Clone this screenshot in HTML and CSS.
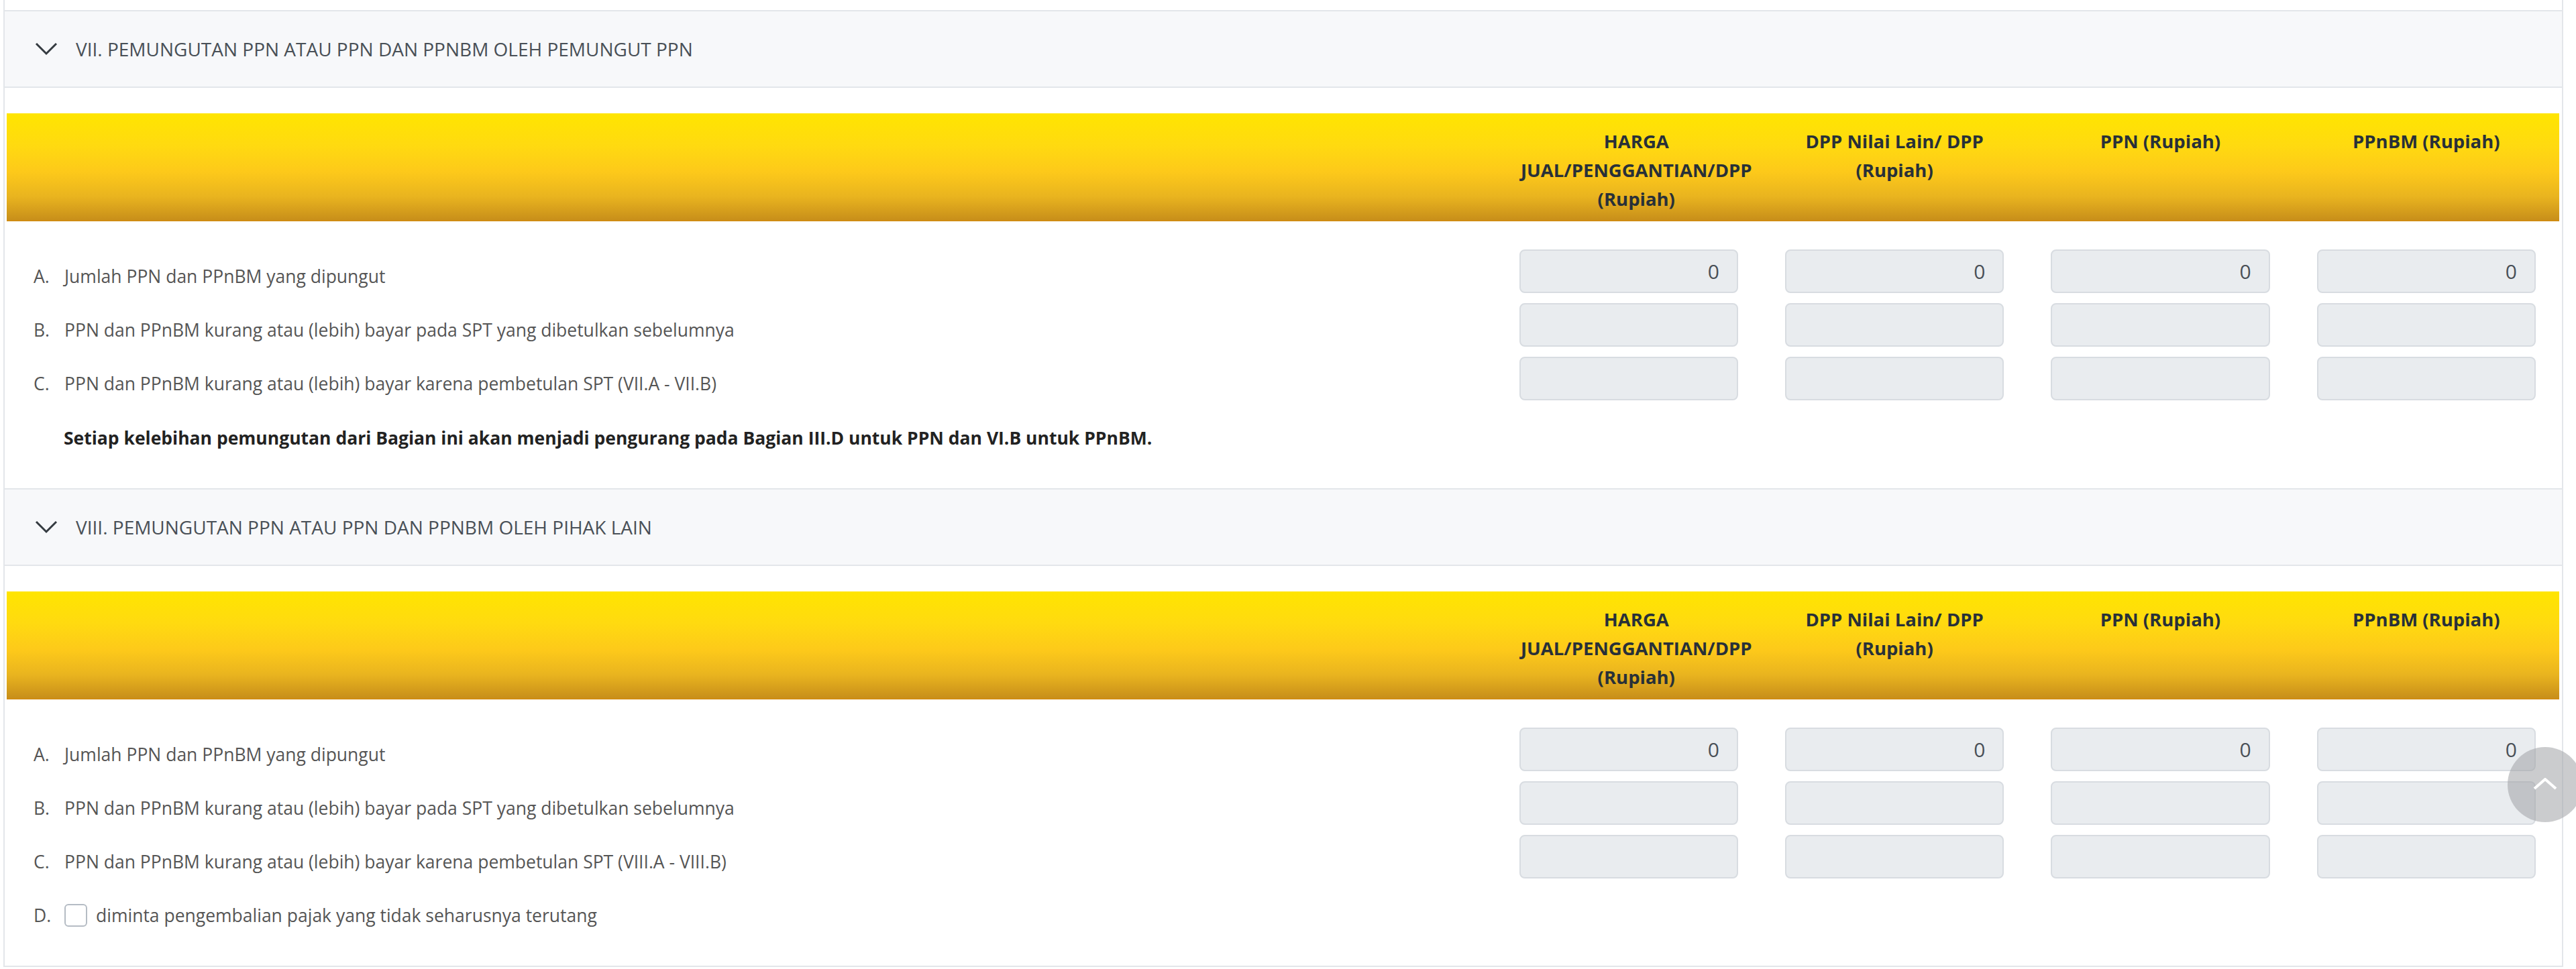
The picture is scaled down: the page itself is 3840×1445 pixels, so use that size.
FILE: index.html
```html
<!DOCTYPE html>
<html lang="id">
<head>
    <meta charset="UTF-8">
    <meta name="viewport" content="width=device-width, initial-scale=1.0">
    <title>SPT Masa PPN - Bagian VII dan VIII</title>
    <link rel="stylesheet" href="styles.css">
</head>
<body>
    <div class="card">

        <!-- Bagian VII -->
        <section class="panel">
            <div class="panel-head">
                <svg class="chevron" viewBox="0 0 34 20" width="34" height="20"><polyline points="2,2 17,17 32,2"/></svg>
                <span>VII. PEMUNGUTAN PPN ATAU PPN DAN PPNBM OLEH PEMUNGUT PPN</span>
            </div>
            <div class="panel-body">
                <div class="grid grid-head">
                    <div></div>
                    <div class="th th-wide">HARGA<br><span class="nw">JUAL/PENGGANTIAN/DPP</span><br>(Rupiah)</div>
                    <div class="th">DPP Nilai Lain/ DPP<br>(Rupiah)</div>
                    <div class="th">PPN (Rupiah)</div>
                    <div class="th">PPnBM (Rupiah)</div>
                </div>

                <div class="rows">
                    <div class="grid row">
                        <div class="label"><span class="letter">A.</span>Jumlah PPN dan PPnBM yang dipungut</div>
                        <div class="cell"><div class="input">0</div></div>
                        <div class="cell"><div class="input">0</div></div>
                        <div class="cell"><div class="input">0</div></div>
                        <div class="cell"><div class="input">0</div></div>
                    </div>
                    <div class="grid row">
                        <div class="label"><span class="letter">B.</span>PPN dan PPnBM kurang atau (lebih) bayar pada SPT yang dibetulkan sebelumnya</div>
                        <div class="cell"><div class="input"></div></div>
                        <div class="cell"><div class="input"></div></div>
                        <div class="cell"><div class="input"></div></div>
                        <div class="cell"><div class="input"></div></div>
                    </div>
                    <div class="grid row">
                        <div class="label"><span class="letter">C.</span>PPN dan PPnBM kurang atau (lebih) bayar karena pembetulan SPT (VII.A - VII.B)</div>
                        <div class="cell"><div class="input"></div></div>
                        <div class="cell"><div class="input"></div></div>
                        <div class="cell"><div class="input"></div></div>
                        <div class="cell"><div class="input"></div></div>
                    </div>
                </div>

                <p class="note">Setiap kelebihan pemungutan dari Bagian ini akan menjadi pengurang pada Bagian III.D untuk PPN dan VI.B untuk PPnBM.</p>
            </div>
        </section>

        <!-- Bagian VIII -->
        <section class="panel">
            <div class="panel-head">
                <svg class="chevron" viewBox="0 0 34 20" width="34" height="20"><polyline points="2,2 17,17 32,2"/></svg>
                <span>VIII. PEMUNGUTAN PPN ATAU PPN DAN PPNBM OLEH PIHAK LAIN</span>
            </div>
            <div class="panel-body">
                <div class="grid grid-head">
                    <div></div>
                    <div class="th th-wide">HARGA<br><span class="nw">JUAL/PENGGANTIAN/DPP</span><br>(Rupiah)</div>
                    <div class="th">DPP Nilai Lain/ DPP<br>(Rupiah)</div>
                    <div class="th">PPN (Rupiah)</div>
                    <div class="th">PPnBM (Rupiah)</div>
                </div>

                <div class="rows">
                    <div class="grid row">
                        <div class="label"><span class="letter">A.</span>Jumlah PPN dan PPnBM yang dipungut</div>
                        <div class="cell"><div class="input">0</div></div>
                        <div class="cell"><div class="input">0</div></div>
                        <div class="cell"><div class="input">0</div></div>
                        <div class="cell"><div class="input">0</div></div>
                    </div>
                    <div class="grid row">
                        <div class="label"><span class="letter">B.</span>PPN dan PPnBM kurang atau (lebih) bayar pada SPT yang dibetulkan sebelumnya</div>
                        <div class="cell"><div class="input"></div></div>
                        <div class="cell"><div class="input"></div></div>
                        <div class="cell"><div class="input"></div></div>
                        <div class="cell"><div class="input"></div></div>
                    </div>
                    <div class="grid row">
                        <div class="label"><span class="letter">C.</span>PPN dan PPnBM kurang atau (lebih) bayar karena pembetulan SPT (VIII.A - VIII.B)</div>
                        <div class="cell"><div class="input"></div></div>
                        <div class="cell"><div class="input"></div></div>
                        <div class="cell"><div class="input"></div></div>
                        <div class="cell"><div class="input"></div></div>
                    </div>
                    <div class="check-row">
                        <span class="letter">D.</span>
                        <span class="checkbox"></span>
                        <span>diminta pengembalian pajak yang tidak seharusnya terutang</span>
                    </div>
                </div>
            </div>
        </section>
    </div>

    <button class="to-top" aria-label="Kembali ke atas">
        <svg viewBox="0 0 36 18" width="36" height="18"><polyline points="2,16 18,2 34,16"/></svg>
    </button>
</body>
</html>
```

FILE: styles.css
```css
body {
    margin: 0;
    font-family: "Open Sans", "Noto Sans", sans-serif;
    color: #495057;
    background-color: #fff;
}

.card {
    margin: 0 19px 0 5px;
    padding-top: 15px;
    border-left: 2px solid #e3e6ea;
    border-right: 2px solid #e3e6ea;
    border-bottom: 2px solid #e3e6ea;
}

.panel-head {
    display: flex;
    align-items: center;
    gap: 27px;
    height: 112px;
    padding-left: 45px;
    background-color: #f7f8fa;
    border-top: 2px solid #e3e6ea;
    border-bottom: 2px solid #e3e6ea;
    font-size: 28px;
    color: #495057;
}

.chevron polyline {
    fill: none;
    stroke: #343a40;
    stroke-width: 3;
}

.panel-body {
    padding: 38px 4px 0 3px;
}

.grid {
    display: grid;
    grid-template-columns: 7fr 1.25fr 1.25fr 1.25fr 1.25fr;
}

.grid-head {
    padding: 20px 0 10px;
    background: linear-gradient(#ffe500 0%, #ffda10 30%, #fdc91a 55%, #e9b41f 78%, #c88f1a 100%);
    border-bottom: 2px solid #d08c12;
}

.th {
    padding: 0 35px;
    text-align: center;
    font-size: 27.5px;
    font-weight: bold;
    line-height: 43px;
    color: #283038;
}

/* la ligne JUAL/PENGGANTIAN/DPP déborde vers la droite */
.th-wide {
    padding-right: 12px;
}

.nw {
    white-space: nowrap;
}

.rows {
    padding-top: 42px;
}

.row {
    margin-bottom: 15px;
}

.label {
    padding: 20px 0 0 40px;
    font-size: 26.5px;
    line-height: 40px;
    color: #555;
}

.letter {
    display: inline-block;
    width: 46px;
}

.cell {
    padding: 0 35px;
}

.input {
    box-sizing: border-box;
    height: 65px;
    padding-right: 26px;
    background-color: #e9ecef;
    border: 2px solid #d8dce1;
    border-radius: 8px;
    text-align: right;
    font-size: 30px;
    line-height: 61px;
    color: #495057;
}

.note {
    margin: 35px 0 0;
    padding: 0 0 54px 85px;
    font-size: 26.5px;
    font-weight: bold;
    line-height: 42px;
    color: #222;
}

.check-row {
    display: flex;
    align-items: center;
    padding: 20px 0 55px 40px;
    font-size: 26.5px;
    line-height: 40px;
    color: #555;
}

.checkbox {
    box-sizing: border-box;
    width: 34px;
    height: 34px;
    margin: 0 13px 0 0;
    border: 2px solid #b5bcc4;
    border-radius: 6px;
    background-color: #fff;
}

.to-top {
    position: fixed;
    right: -10px;
    bottom: 219px;
    width: 112px;
    height: 112px;
    padding: 0;
    border: none;
    border-radius: 50%;
    background-color: rgba(160, 162, 166, 0.55);
    cursor: pointer;
}

.to-top polyline {
    fill: none;
    stroke: #fff;
    stroke-width: 4;
}
```
